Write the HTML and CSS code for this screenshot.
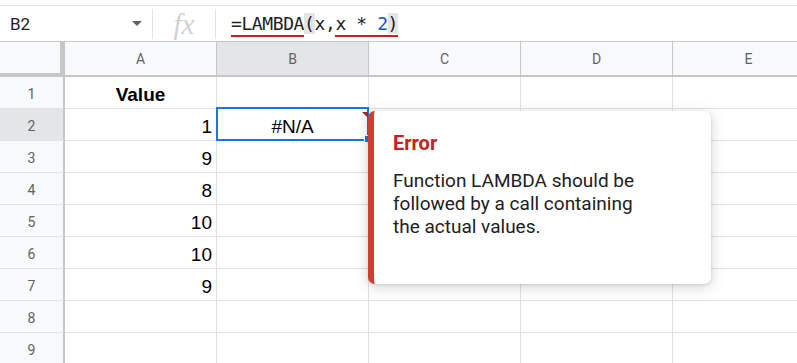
FILE: index.html
```html
<!DOCTYPE html>
<html>
    <head>
        <meta charset="utf-8">
        <title>Sheet - LAMBDA error</title>
        <link rel="stylesheet" href="styles.css">
    </head>
    <body>
        <div class="topline"></div>
        <div class="formula-bar">
            <div class="namebox">B2 <span class="caret"></span></div>
            <div class="sep"></div>
            <div class="fx">fx</div>
            <div class="sep"></div>
            <div class="formula"><span class="err">=LAMBDA</span><span class="paren">(</span>x,<span class="err">x * <span class="num">2</span><span class="paren">)</span></span></div>
        </div>
        <div class="sheet">
            <div class="corner"></div>
            <div class="colhead">A</div>
            <div class="colhead active">B</div>
            <div class="colhead">C</div>
            <div class="colhead">D</div>
            <div class="colhead">E</div>

            <div class="rowhead">1</div>
            <div class="cell center bold">Value</div>
            <div class="cell"></div><div class="cell"></div><div class="cell"></div><div class="cell"></div>

            <div class="rowhead active">2</div>
            <div class="cell right">1</div>
            <div class="cell center selected">#N/A</div>
            <div class="cell"></div><div class="cell"></div><div class="cell"></div>

            <div class="rowhead">3</div>
            <div class="cell right">9</div>
            <div class="cell"></div><div class="cell"></div><div class="cell"></div><div class="cell"></div>

            <div class="rowhead">4</div>
            <div class="cell right">8</div>
            <div class="cell"></div><div class="cell"></div><div class="cell"></div><div class="cell"></div>

            <div class="rowhead">5</div>
            <div class="cell right">10</div>
            <div class="cell"></div><div class="cell"></div><div class="cell"></div><div class="cell"></div>

            <div class="rowhead">6</div>
            <div class="cell right">10</div>
            <div class="cell"></div><div class="cell"></div><div class="cell"></div><div class="cell"></div>

            <div class="rowhead">7</div>
            <div class="cell right">9</div>
            <div class="cell"></div><div class="cell"></div><div class="cell"></div><div class="cell"></div>

            <div class="rowhead">8</div>
            <div class="cell"></div><div class="cell"></div><div class="cell"></div><div class="cell"></div><div class="cell"></div>

            <div class="rowhead">9</div>
            <div class="cell"></div><div class="cell"></div><div class="cell"></div><div class="cell"></div><div class="cell"></div>

            <div class="popup">
                <div class="popup-title">Error</div>
                <div class="popup-text">Function LAMBDA should be followed by a call containing the actual values.</div>
            </div>
        </div>
    </body>
</html>
```
FILE: styles.css
```css
body{
    margin: 0;
    font-family: Roboto, "Liberation Sans", sans-serif;
    background: #fff;
    overflow: hidden;
}
.topline{
    height: 5px;
}
.formula-bar{
    display: flex;
    align-items: center;
    height: 35px;
    border-top: 1px solid #e3e3e3;
}
.namebox{
    display: flex;
    align-items: center;
    width: 152px;
    box-sizing: border-box;
    padding-left: 10px;
    font-size: 17px;
    color: #202124;
}
.caret{
    margin-left: auto;
    margin-right: 10px;
    width: 0; height: 0;
    border-left: 5px solid transparent;
    border-right: 5px solid transparent;
    border-top: 5px solid #5f6368;
}
.sep{
    width: 1px;
    height: 30px;
    background: #e3e3e3;
}
.fx{
    width: 62px;
    text-align: center;
    font-family: "Liberation Serif", serif;
    font-style: italic;
    font-size: 29px;
    color: #cfd1d3;
    line-height: 30px;
}
.formula{
    padding-left: 15px;
    font-family: "DejaVu Sans Mono", monospace;
    font-size: 18px;
    letter-spacing: -0.4px;
    color: #202124;
    line-height: 22px;
}
.formula .err{
    border-bottom: 2px solid #c5221f;
    padding-bottom: 1px;
}
.formula .paren{
    background: #e3e5e8;
}
.formula .num{
    color: #1155cc;
}
.sheet{
    position: relative;
    display: grid;
    grid-template-columns: 65px repeat(5, 152px);
    grid-template-rows: 35px repeat(9, 32px);
    border-top: 1px solid #c4c7c5;
}
.sheet > div{
    box-sizing: border-box;
}
.corner{
    background: #f8f9fa;
    border-right: 5px solid #c4c7c5;
    border-bottom: 4px solid #c4c7c5;
}
.colhead{
    display: flex;
    align-items: center;
    justify-content: center;
    background: #f8f9fa;
    border-right: 1px solid #c4c7c5;
    border-bottom: 2px solid #c4c7c5;
    font-size: 14px;
    color: #5f6368;
}
.rowhead{
    display: flex;
    align-items: center;
    justify-content: center;
    padding-top: 2px;
    background: #f8f9fa;
    border-right: 2px solid #c4c7c5;
    border-bottom: 1px solid #e1e1e1;
    font-size: 14px;
    color: #5f6368;
}
.colhead.active, .rowhead.active{
    background: #e3e5e8;
}
.cell{
    display: flex;
    align-items: flex-end;
    padding: 0 4px 2px;
    border-right: 1px solid #e1e1e1;
    border-bottom: 1px solid #e1e1e1;
    font-family: "Liberation Sans", Arial, sans-serif;
    font-size: 19px;
    line-height: 22px;
    color: #000;
}
.cell.right{
    justify-content: flex-end;
}
.cell.center{
    justify-content: center;
}
.cell.bold{
    font-weight: bold;
}
.cell.selected{
    position: relative;
}
.cell.selected::before{
    content: "";
    position: absolute;
    left: -1px; top: -2px; right: -1px; bottom: -1px;
    border: 2px solid #1a73e8;
}
.cell.selected::after{
    content: "";
    position: absolute;
    right: -3px; bottom: -3px;
    width: 5px; height: 6px;
    background: #1a73e8;
    border: 1px solid #fff;
}
.popup{
    position: absolute;
    left: 368px;
    top: 69px;
    width: 343px;
    height: 173px;
    box-sizing: border-box;
    padding: 19px 20px 0 19px;
    background: #fff;
    border-left: 6px solid #d33b2f;
    border-radius: 7px;
    box-shadow: 0 3px 14px rgba(60, 64, 67, 0.22), 0 1px 3px rgba(60, 64, 67, 0.15);
}
.popup::before{
    content: "";
    position: absolute;
    left: -12px; top: 1px;
    width: 0; height: 0;
    border-left: 6px solid transparent;
    border-top: 6px solid #a8262a;
}
.popup-title{
    color: #c5221f;
    font-size: 20px;
    font-weight: bold;
    line-height: 26px;
}
.popup-text{
    margin-top: 13px;
    width: 268px;
    font-size: 19px;
    line-height: 23px;
    color: #202124;
}
```
